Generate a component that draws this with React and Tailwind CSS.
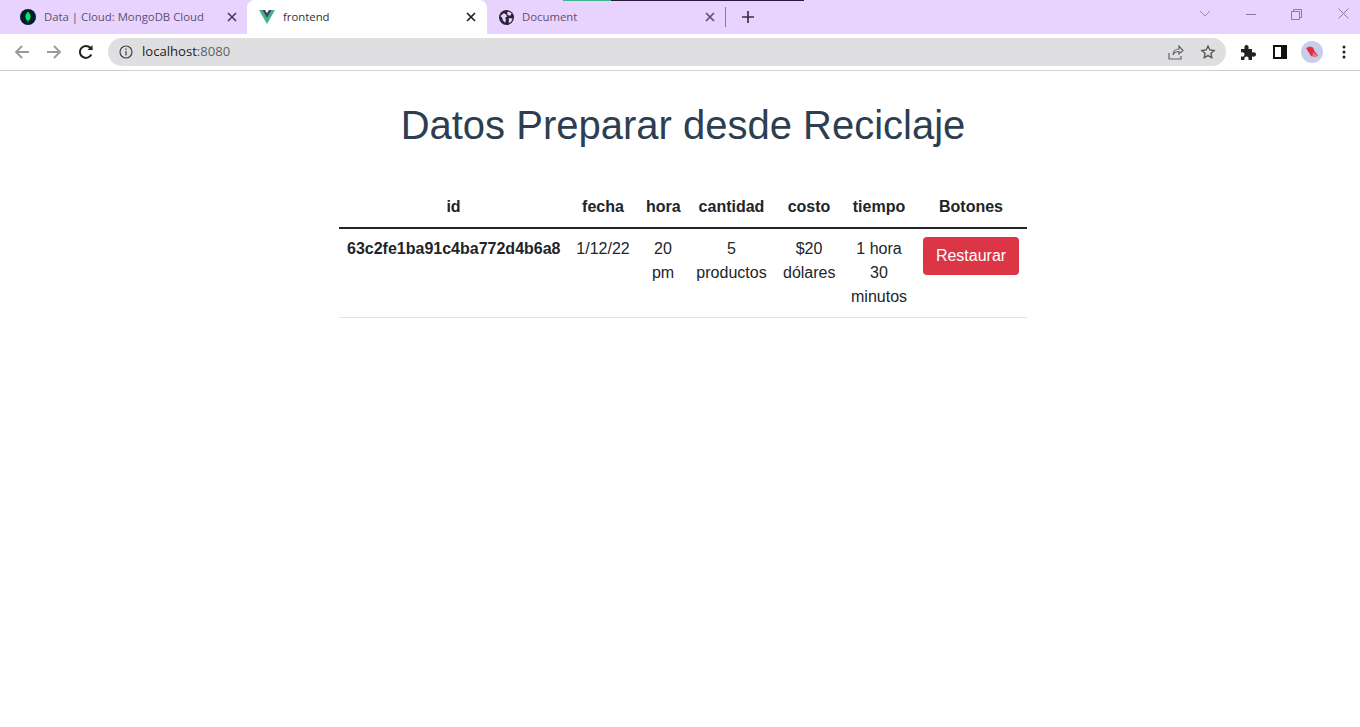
const font = { fontFamily: '"Liberation Sans", Arial, sans-serif' };

function CloseIcon({ color = "#5f4f6e" }) {
  return (
    <svg width="10" height="10" viewBox="0 0 10 10" fill="none" stroke={color} strokeWidth="1.7">
      <path d="M1 1l8 8M9 1l-8 8" />
    </svg>
  );
}

function MongoIcon() {
  return (
    <svg width="16" height="16" viewBox="0 0 16 16">
      <circle cx="8" cy="8" r="8" fill="#001e2b" />
      <path d="M8 2.500c1.800 2 2.600 3.700 2.600 5.300 0 2-1.200 3.300-2.200 3.900L8.200 13.600h-.4L7.600 11.700C6.600 11.100 5.400 9.800 5.400 7.800 5.400 6.200 6.200 4.500 8 2.500z" fill="#00ed64" />
    </svg>
  );
}

function VueIcon() {
  return (
    <svg width="16" height="14" viewBox="0 0 16 14">
      <path d="M0 0h3.200L8 8.300 12.800 0H16L8 14z" fill="#41b883" />
      <path d="M3.200 0h2.900L8 3.300 9.900 0h2.900L8 8.300z" fill="#35495e" />
    </svg>
  );
}

function GlobeIcon() {
  return (
    <svg width="15" height="15" viewBox="0 0 16 16">
      <circle cx="8" cy="8" r="8" fill="#2a2333" />
      <path d="M1.500 6.500l3.500-3 2.500 1 1 2.500-2 1.500 1 2-1 3-2.500-2.500-.5-2.500zM10 1.500l3.500 2-1.500 2.500-2.500-.5-1-2.500zM10.500 8.500l4 .5-1.500 3.500-2.500 1.500z" fill="#e8d3ff" />
    </svg>
  );
}

function Tab({ icon, title, active, width, closeColor, textColor, iconBox, closeBox }) {
  return (
    <div
      className={`flex h-[34px] items-center shrink-0 ${active ? "bg-white rounded-t-[8px]" : ""}`}
      style={{ width }}
    >
      <div className={`flex items-center justify-start shrink-0 ${iconBox}`}>{icon}</div>
      <span className="flex-1 text-[11.35px] truncate" style={{ color: textColor, fontFamily: '"Open Sans", "Noto Sans", sans-serif' }}>
        {title}
      </span>
      <div className={`w-[28px] flex shrink-0 justify-start ${closeBox}`}>
        <CloseIcon color={closeColor} />
      </div>
    </div>
  );
}

function BrowserChrome() {
  return (
    <div>
      <div className="relative h-[34px] bg-[#e8d3ff] flex">
        <div className="absolute left-[563px] top-0 h-px w-[48px] bg-[#3fb68f]" />
        <div className="absolute left-[611px] top-0 h-px w-[193px] bg-[#2a1a3a]" />
        <div className="flex pl-[8px]">
          <Tab icon={<MongoIcon />} title="Data | Cloud: MongoDB Cloud" width={239} closeColor="#4a3f57" textColor="#5f4f6e" iconBox="w-[36px] pl-[12px]" closeBox="pl-[8px]" />
          <Tab icon={<VueIcon />} title="frontend" active width={240} closeColor="#222222" textColor="#333333" iconBox="w-[36px] pl-[12px]" closeBox="pl-[7px]" />
          <Tab icon={<GlobeIcon />} title="Document" width={239} closeColor="#5f4f6e" textColor="#5f4f6e" iconBox="w-[35px] pl-[12px]" closeBox="pl-[7px]" />
        </div>
        <div className="w-px h-[20px] mt-[7px] -ml-px bg-[#8a7a99]" />
        <svg className="ml-[16px] mt-[11px]" width="12" height="12" viewBox="0 0 12 12" stroke="#3a3144" strokeWidth="1.700">
          <path d="M6 0v12M0 6h12" />
        </svg>
        <div className="ml-auto flex items-start">
          <svg className="mt-[10px] mr-[35px]" width="12" height="8" viewBox="0 0 12 8" fill="none" stroke="#9a8ca8" strokeWidth="1">
            <path d="M1 1l5 5 5-5" />
          </svg>
          <svg className="mt-[14px] mr-[35px]" width="10" height="1" viewBox="0 0 10 1" stroke="#8a7c98">
            <path d="M0 .5h10" />
          </svg>
          <svg className="mt-[9px] mr-[36px]" width="11" height="11" viewBox="0 0 11 11" fill="none" stroke="#8a7c98">
            <path d="M.5 2.500h8v8h-8zM2.500 2.500v-2h8v8h-2" />
          </svg>
          <svg className="mt-[8px] mr-[11px]" width="11" height="11" viewBox="0 0 11 11" fill="none" stroke="#8a7c98">
            <path d="M.5.500l10 10M10.500.500l-10 10" />
          </svg>
        </div>
      </div>
      <div className="h-[37px] bg-white border-b border-[#cfcfcf] flex items-start pt-[4px]">
        <svg className="ml-[14px] mt-[6px]" width="16" height="16" viewBox="0 0 16 16" fill="none" stroke="#9a9a9a" strokeWidth="1.800">
          <path d="M15 8H2M8 2L2 8l6 6" />
        </svg>
        <svg className="ml-[16px] mt-[6px]" width="16" height="16" viewBox="0 0 16 16" fill="none" stroke="#9a9a9a" strokeWidth="1.800">
          <path d="M1 8h13M8 2l6 6-6 6" />
        </svg>
        <svg className="ml-[16px] mt-[6px]" width="16" height="16" viewBox="0 0 16 16" fill="none" stroke="#222222" strokeWidth="2">
          <path d="M13.300 10.500A6 6 0 1 1 12.300 3.800L14 5.500" />
          <path d="M14.500 1v5h-5" fill="#222222" stroke="none" />
        </svg>
        <div className="ml-[14px] w-[1118px] h-[28px] rounded-full bg-[#dfdfe1] flex items-center">
          <svg className="ml-[11px]" width="14" height="14" viewBox="0 0 14 14" fill="none" stroke="#444444" strokeWidth="1.200">
            <circle cx="7" cy="7" r="6" />
            <path d="M7 6v4.500M7 3.500v1.500" />
          </svg>
          <span className="ml-[9px] text-[13.1px] text-[#222222]" style={{ fontFamily: '"Open Sans", "Noto Sans", sans-serif' }}>
            localhost<span className="text-[#5f6368]">:8080</span>
          </span>
          <svg className="ml-auto" width="16" height="16" viewBox="0 0 16 16" fill="none" stroke="#5f6368" strokeWidth="1.200">
            <path d="M1 9v6h12v-3M5 11c0-4 3-6 6-6V2l4 4.500L11 10V7.500c-2.500 0-5 1-6 3.500z" />
          </svg>
          <svg className="ml-[16px] mr-[10px]" width="16" height="16" viewBox="0 0 16 16" fill="none" stroke="#555555" strokeWidth="1.300">
            <path d="M8 2l1.800 4 4.400.5-3.300 2.900.9 4.400L8 11.600l-3.800 2.200.9-4.400L1.800 6.500 6.200 6z" />
          </svg>
        </div>
        <svg className="ml-[14px] mt-[6px]" width="16" height="16" viewBox="0 0 16 16" fill="#222222">
          <path d="M1 5h3.500C4 2 5 1 6.500 1S9 2 8.500 5H12v3.500c3-.5 4 .5 4 2s-1 2.500-4 2V16H8.500c.5-2.500-.5-3.500-2-3.500s-2.500 1-2 3.500H1v-3.500c2.500.5 3.500-.5 3.500-2S3.500 8 1 8.500z" />
        </svg>
        <svg className="ml-[17px] mt-[7px]" width="14" height="14" viewBox="0 0 14 14">
          <rect x="1" y="1" width="12" height="12" fill="none" stroke="#111111" strokeWidth="2" />
          <rect x="8" y="1" width="5" height="12" fill="#111111" />
        </svg>
        <svg className="ml-[14px] mt-[3px]" width="22" height="22" viewBox="0 0 22 22">
          <circle cx="11" cy="11" r="11" fill="#c9cdec" />
          <path d="M5 7l4-1.500 3 1 1.500 3.500 3.500 4.500-3 1.500-4-1-2.500-4z" fill="#e0303c" />
          <path d="M12 11l5 4-3 1.500-2.500-1.500z" fill="#e8798a" />
        </svg>
        <svg className="ml-[19px] mt-[7px]" width="4" height="14" viewBox="0 0 4 14" fill="#222222">
          <circle cx="2" cy="2" r="1.500" />
          <circle cx="2" cy="7" r="1.500" />
          <circle cx="2" cy="12" r="1.500" />
        </svg>
      </div>
    </div>
  );
}

export default function App() {
  return (
    <div className="min-h-[727px] bg-white" style={font}>
      <BrowserChrome />
      <div className="flex flex-col items-center pl-[6px]">
        <h1 className="mt-[30px] text-[40px] leading-[48px] font-normal text-[#2c3e50]">
          Datos Preparar desde Reciclaje
        </h1>
        <table className="mt-[38px] w-[688px] table-fixed border-collapse text-[16px] leading-[24px] text-[#212529] text-center">
          <colgroup>
            <col className="w-[229px]" />
            <col className="w-[70px]" />
            <col className="w-[50px]" />
            <col className="w-[87px]" />
            <col className="w-[68px]" />
            <col className="w-[72px]" />
            <col className="w-[112px]" />
          </colgroup>
          <thead>
            <tr className="border-b-2 border-[#212529]">
              <th className="p-2 font-bold">id</th>
              <th className="p-2 font-bold">fecha</th>
              <th className="p-2 font-bold">hora</th>
              <th className="p-2 font-bold">cantidad</th>
              <th className="p-2 font-bold">costo</th>
              <th className="p-2 font-bold">tiempo</th>
              <th className="p-2 font-bold">Botones</th>
            </tr>
          </thead>
          <tbody>
            <tr className="border-b border-[#dee2e6]">
              <th className="p-2 font-bold align-top">63c2fe1ba91c4ba772d4b6a8</th>
              <td className="p-2 align-top">1/12/22</td>
              <td className="p-2 align-top">20 pm</td>
              <td className="p-2 align-top">5 productos</td>
              <td className="p-2 align-top">$20 dólares</td>
              <td className="p-2 align-top">1 hora 30 minutos</td>
              <td className="p-2 align-top">
                <button className="h-[38px] w-[96px] rounded-[4px] bg-[#dc3545] text-white text-[16px]">Restaurar</button>
              </td>
            </tr>
          </tbody>
        </table>
      </div>
    </div>
  );
}
